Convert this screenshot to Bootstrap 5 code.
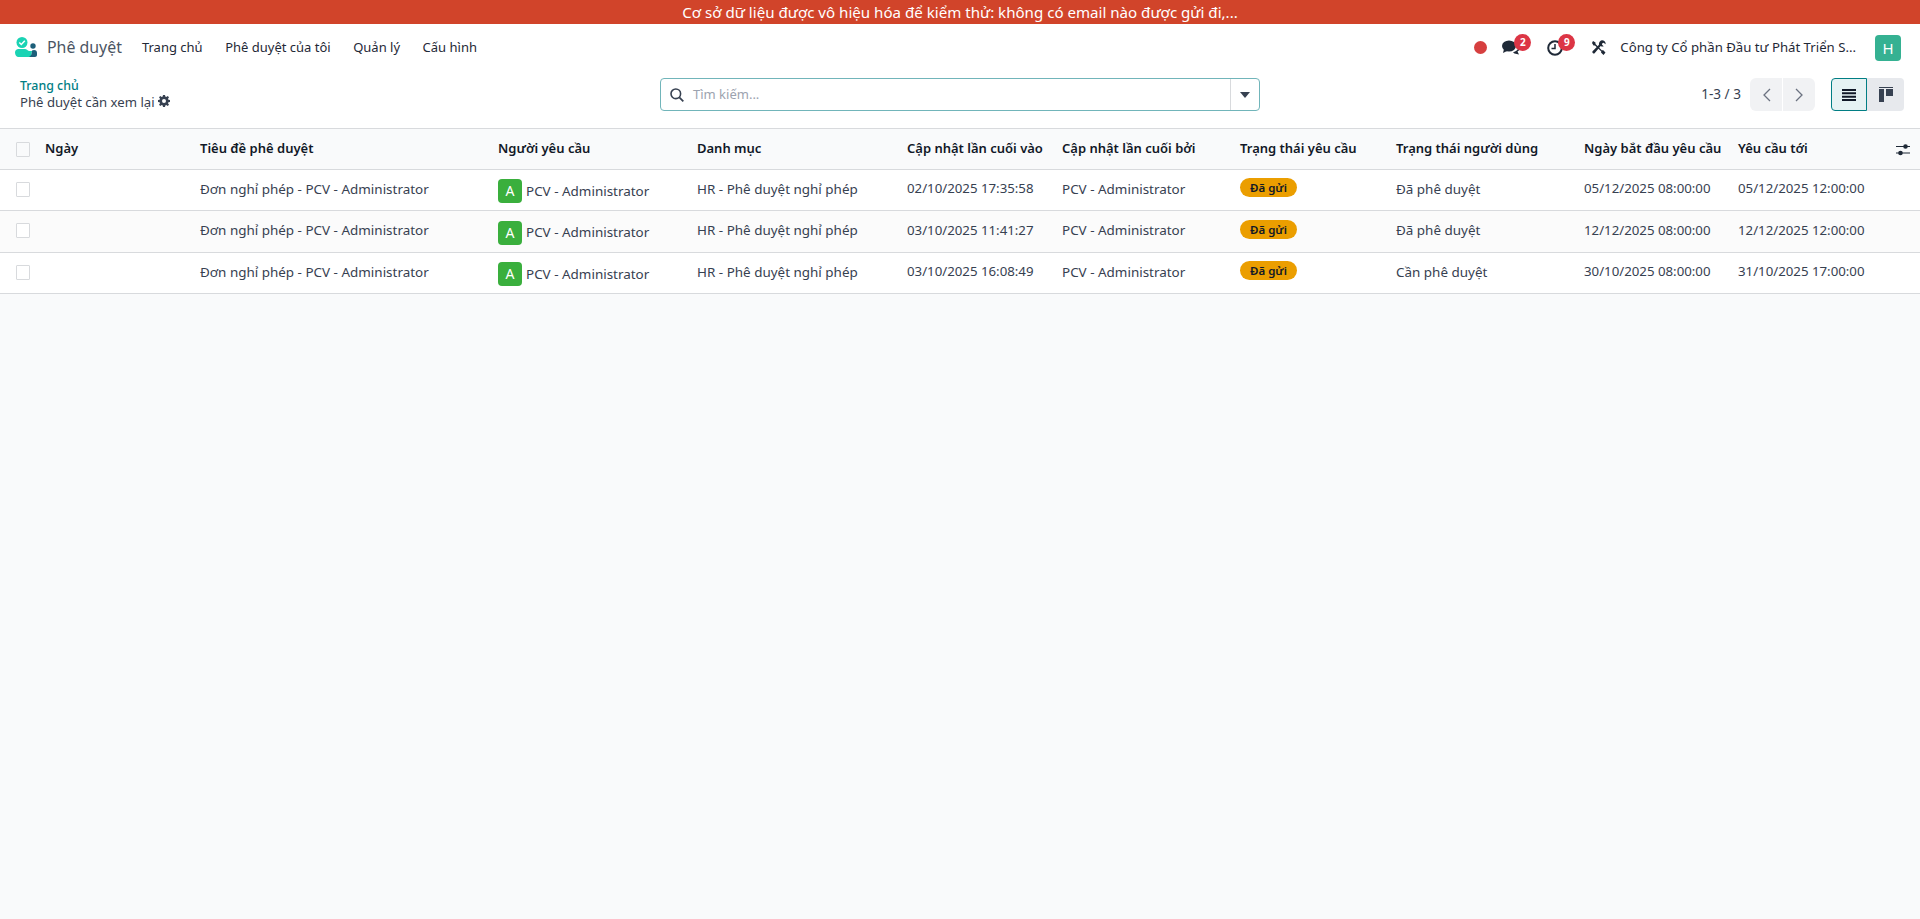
<!DOCTYPE html>
<html lang="vi">
<head>
    <meta charset="UTF-8">
    <meta name="viewport" content="width=device-width, initial-scale=1.0">
    <title>Phê duyệt</title>
    <link rel="stylesheet" href="https://cdn.jsdelivr.net/npm/bootstrap@5.3.0/dist/css/bootstrap.min.css">
    <style>
        html, body { height: 100%; }
        body { font-family: "Noto Sans", "Liberation Sans", sans-serif; font-size: 13px; color: #374151; background: #f9fafb; }
        .db-ribbon { height: 24px; line-height: 24px; background: #d1442a; color: #fff; font-size: 15.1px; }
        .top-bar { height: 46px; background: #fff; padding: 1px 19px 0 15px; color: #1f2937; }
        .app-name { font-size: 15.9px; color: #4b5563; margin-left: 10px; margin-right: 20px; }
        .top-menu { gap: 22.5px; color: #1f2937; font-size: 13px; }
        .sys-tray { color: #1f2937; }
        .rec-dot { width: 13px; height: 13px; border-radius: 50%; background: #d63f3f; margin-right: 15px; }
        .tray-icon { position: relative; display: block; }
        .tray-chat { margin-right: 27px; }
        .tray-clock { margin-right: 28px; }
        .tray-count { position: absolute; width: 17px; height: 17px; line-height: 17px; border-radius: 50%; background: #dc3545; color: #fff; font-size: 10px; font-weight: 700; text-align: center; top: -6px; }
        .company-name { margin: 0 19px 0 14px; font-size: 13.2px; }
        .user-avatar { width: 26px; height: 26px; line-height: 26px; border-radius: 4px; background: #35b192; color: #fff; text-align: center; font-size: 15px; }
        .ctrl-panel { height: 58px; background: #fff; padding: 8px 16px 17px 20px; }
        .crumbs { width: 640px; line-height: 16px; }
        .crumb-link { color: #017e84; font-weight: 500; font-size: 12.4px; }
        .crumb-current { font-size: 13.15px; }
        .search-box { width: 600px; height: 33px; border: 1px solid #71b5ba; border-radius: 4px; background: #fff; }
        .search-main { padding-left: 9px; gap: 9px; color: #9ca3af; }
        .search-drop { width: 29px; border-left: 1px solid #d8dadd; }
        .pager-val { margin-right: 9px; font-size: 13.6px; }
        .pager-btn { width: 32px; height: 33px; background: #f1f2f4; color: #6b7280; }
        .pager-btn + .pager-btn { margin-left: 1px; }
        .view-btn { height: 33px; background: #e7e9ed; }
        .view-list { width: 36px; background: #e6f2f3; border: 1px solid #017e84; border-radius: 4px 0 0 4px; }
        .view-kanban { width: 37px; border-radius: 0 4px 4px 0; }
        .rec-table { table-layout: fixed; width: 1920px; margin: 0; color: #374151; border-color: #d8dadd; font-size: 13.45px; }
        .rec-table > :not(caption) > * > * { padding: 0 8px; vertical-align: middle; box-shadow: none; border-color: #d8dadd; white-space: nowrap; overflow: hidden; background: transparent; color: inherit; }
        .rec-table thead tr { height: 41px; background: #f9fafb; border-top: 1px solid #d8dadd; }
        .rec-table thead th { color: #111827; font-weight: 600; font-size: 13px; }
        .rec-table tbody tr { height: 41px; background: #fff; }
        .rec-table tbody tr:nth-child(2) { height: 42px; background: #fbfbfb; }
        .rec-table tbody td { padding-bottom: 2px; }
        .rec-table tbody td.cell-date { font-size: 13.25px; }
        .row-check { display: block; width: 14px; height: 15px; border: 1px solid #d8dadd; background: #fff; border-radius: 1px; margin-left: 16px; }
        .thead-check { background: #f9fafb; }
        .rec-table > :not(caption) > * > .cell-check { padding: 0 0 2px; overflow: visible; }
        .rec-table > thead > tr > .cell-check { padding: 0; }
        .rec-table > thead > tr > .cell-tune { padding-left: 16px; }
        .req-avatar { display: inline-block; width: 24px; height: 24px; line-height: 24px; border-radius: 4px; background: #3aaf3d; color: #fff; text-align: center; font-size: 14px; margin-right: 4px; vertical-align: middle; }
        .req-name { display: inline-block; vertical-align: -1px; }
        .rec-table tbody td.req-cell { padding-top: 2px; padding-bottom: 0; }
        .state-pill { display: inline-block; height: 19px; line-height: 19px; padding: 0 10px; border-radius: 10px; background: #eb9e00; color: #111827; font-size: 11.5px; font-weight: 600; margin-top: -5px; vertical-align: middle; }
    </style>
</head>
<body>

<!-- bandeau -->
<div class="db-ribbon text-center">Cơ sở dữ liệu được vô hiệu hóa để kiểm thử: không có email nào được gửi đi,...</div>

<!-- barre du haut -->
<nav class="top-bar d-flex align-items-center justify-content-between">
    <div class="d-flex align-items-center">
        <svg width="22" height="20" viewBox="0 0 22 20">
            <path d="M0 15.500c0-2 1.500-3.500 3.500-3.500H10c1.500 0 2.500 1.500 4 2h3l-1 6H3.500C1.500 20 0 18 0 15.500z" fill="#1ad3b4"/>
            <path d="M14 20c2-1 3-3 3-6.500l2-.5c2 0 3 1 3 3v2c0 1-1 2-2 2z" fill="#1d5f7a"/>
            <circle cx="7" cy="5.500" r="5.500" fill="#1ad3b4"/>
            <path d="M4.300 5.500l2 2 3.500-3.800" fill="none" stroke="#fff" stroke-width="1.500"/>
            <circle cx="18" cy="9" r="2.700" fill="#1d5f7a"/>
        </svg>
        <span class="app-name">Phê duyệt</span>
        <div class="top-menu d-flex">
            <span>Trang chủ</span>
            <span>Phê duyệt của tôi</span>
            <span>Quản lý</span>
            <span>Cấu hình</span>
        </div>
    </div>
    <div class="sys-tray d-flex align-items-center">
        <span class="rec-dot"></span>
        <span class="tray-icon tray-chat">
            <svg width="18" height="15" viewBox="0 0 18 15" class="d-block"><ellipse cx="7" cy="6" rx="7" ry="5.500" fill="#1f2937"/><path d="M2 9l-1 4 5-2.500z" fill="#1f2937"/><path d="M12.500 13.500l4.500 1-1.500-3c1.500-1 2.500-2 2.500-3.500 0-.7-.2-1.300-.6-1.900-.8 3.500-3.500 5.700-6.400 6.200z" fill="#1f2937"/></svg>
            <span class="tray-count" style="left: 12px">2</span>
        </span>
        <span class="tray-icon tray-clock">
            <svg width="16" height="16" viewBox="0 0 16 16" class="d-block"><circle cx="8" cy="8" r="6.800" fill="none" stroke="#1f2937" stroke-width="2"/><path d="M8 4v4.500H4.500" fill="none" stroke="#1f2937" stroke-width="1.500"/></svg>
            <span class="tray-count" style="left: 11px">9</span>
        </span>
        <svg width="15" height="15" viewBox="0 0 15 15">
            <path d="M2 1l2.500 1.500v1.500l6.500 6.500 1-.4 2.500 2.500-2 2.400-2.500-2.500.3-1L4 5.500H2.500L1 3z" fill="#1f2937"/>
            <path d="M10 .5a3.500 3.500 0 0 1 4.600 3.700l-2-1.400-1.300.4-.3 1.500 1.700 1.500c-1 .5-2.300.3-3-.3L3.800 12.900a1.400 1.400 0 0 1-2-2L8 4.800c-.3-1.600.5-3.500 2-4.300z" fill="#1f2937"/>
        </svg>
        <span class="company-name">Công ty Cổ phần Đầu tư Phát Triển S...</span>
        <span class="user-avatar">H</span>
    </div>
</nav>

<!-- panneau de contrôle -->
<div class="ctrl-panel d-flex align-items-start">
    <div class="crumbs">
        <div class="crumb-link">Trang chủ</div>
        <div class="crumb-current">Phê duyệt cần xem lại
            <svg width="12" height="12" viewBox="0 0 12 12" class="align-baseline"><path fill="#374151" fill-rule="evenodd" d="M5 0h2l.3 1.600 1 .4L9.700 1l1.300 1.300-1 1.400.4 1 1.600.3v2l-1.600.3-.4 1 1 1.400L9.700 11l-1.400-1-1 .4L7 12H5l-.3-1.600-1-.4-1.400 1L1 9.700l1-1.400-.4-1L0 7V5l1.600-.3.4-1-1-1.400L2.300 1l1.400 1 1-.4zM6 4a2 2 0 1 0 0 4 2 2 0 0 0 0-4z"/></svg>
        </div>
    </div>
    <div class="search-box d-flex">
        <div class="search-main flex-grow-1 d-flex align-items-center">
            <svg width="14" height="14" viewBox="0 0 14 14"><circle cx="5.800" cy="5.800" r="4.800" fill="none" stroke="#374151" stroke-width="1.600"/><path d="M9.300 9.300l4 4" stroke="#374151" stroke-width="1.800"/></svg>
            <span>Tìm kiếm...</span>
        </div>
        <div class="search-drop d-flex align-items-center justify-content-center">
            <svg width="10" height="6" viewBox="0 0 10 6"><path d="M0 0h10L5 6z" fill="#374151"/></svg>
        </div>
    </div>
    <div class="flex-grow-1 d-flex align-items-center justify-content-end">
        <span class="pager-val">1-3 / 3</span>
        <span class="pager-btn rounded-start d-flex align-items-center justify-content-center">
            <svg width="9" height="14" viewBox="0 0 9 14"><path d="M8 1L2 7l6 6" fill="none" stroke="#6b7280" stroke-width="1.300"/></svg>
        </span>
        <span class="pager-btn rounded-end d-flex align-items-center justify-content-center">
            <svg width="9" height="14" viewBox="0 0 9 14"><path d="M1 1l6 6-6 6" fill="none" stroke="#6b7280" stroke-width="1.300"/></svg>
        </span>
        <span class="view-btn view-list ms-3 d-flex align-items-center justify-content-center">
            <svg width="14" height="12" viewBox="0 0 14 12"><path d="M0 0h14v2H0zM0 3.300h14v2H0zM0 6.700h14v2H0zM0 10h14v2H0z" fill="#111827"/></svg>
        </span>
        <span class="view-btn view-kanban d-flex align-items-center justify-content-center">
            <svg width="14" height="15" viewBox="0 0 14 15"><path d="M0 0h14v1H0zM0 2h5v13H0zM7 2h7v7H7z" fill="#374151"/></svg>
        </span>
    </div>
</div>

<!-- liste -->
<table class="table rec-table">
    <colgroup>
        <col style="width: 37px"><col style="width: 155px"><col style="width: 298px"><col style="width: 199px">
        <col style="width: 210px"><col style="width: 155px"><col style="width: 178px"><col style="width: 156px">
        <col style="width: 188px"><col style="width: 154px"><col style="width: 150px"><col style="width: 40px">
    </colgroup>
    <thead>
        <tr>
            <th class="cell-check"><span class="row-check thead-check"></span></th>
            <th>Ngày</th>
            <th>Tiêu đề phê duyệt</th>
            <th>Người yêu cầu</th>
            <th>Danh mục</th>
            <th>Cập nhật lần cuối vào</th>
            <th>Cập nhật lần cuối bởi</th>
            <th>Trạng thái yêu cầu</th>
            <th>Trạng thái người dùng</th>
            <th>Ngày bắt đầu yêu cầu</th>
            <th>Yêu cầu tới</th>
            <th class="cell-tune">
                <svg width="14" height="12" viewBox="0 0 14 12"><path d="M0 2.500h14M0 9h14" stroke="#1f2937" stroke-width="1.200"/><circle cx="9.500" cy="2.500" r="2.300" fill="#1f2937"/><circle cx="4.500" cy="9" r="2.300" fill="#1f2937"/></svg>
            </th>
        </tr>
    </thead>
    <tbody id="recBody"></tbody>
</table>

<script>
    const requests = [
        { updated: '02/10/2025 17:35:58', user: 'Đã phê duyệt', start: '05/12/2025 08:00:00', end: '05/12/2025 12:00:00' },
        { updated: '03/10/2025 11:41:27', user: 'Đã phê duyệt', start: '12/12/2025 08:00:00', end: '12/12/2025 12:00:00' },
        { updated: '03/10/2025 16:08:49', user: 'Cần phê duyệt', start: '30/10/2025 08:00:00', end: '31/10/2025 17:00:00' }
    ];
    const tableBody = document.getElementById('recBody');
    requests.forEach(req => {
        const row = document.createElement('tr');
        row.innerHTML = `
            <td class="cell-check"><span class="row-check"></span></td>
            <td></td>
            <td>Đơn nghỉ phép - PCV - Administrator</td>
            <td class="req-cell"><span class="req-avatar">A</span><span class="req-name">PCV - Administrator</span></td>
            <td>HR - Phê duyệt nghỉ phép</td>
            <td class="cell-date">${req.updated}</td>
            <td>PCV - Administrator</td>
            <td><span class="state-pill">Đã gửi</span></td>
            <td>${req.user}</td>
            <td class="cell-date">${req.start}</td>
            <td class="cell-date">${req.end}</td>
            <td></td>
        `;
        tableBody.appendChild(row);
    });
</script>
<script src="https://cdn.jsdelivr.net/npm/bootstrap@5.3.0/dist/js/bootstrap.bundle.min.js"></script>
</body>
</html>
